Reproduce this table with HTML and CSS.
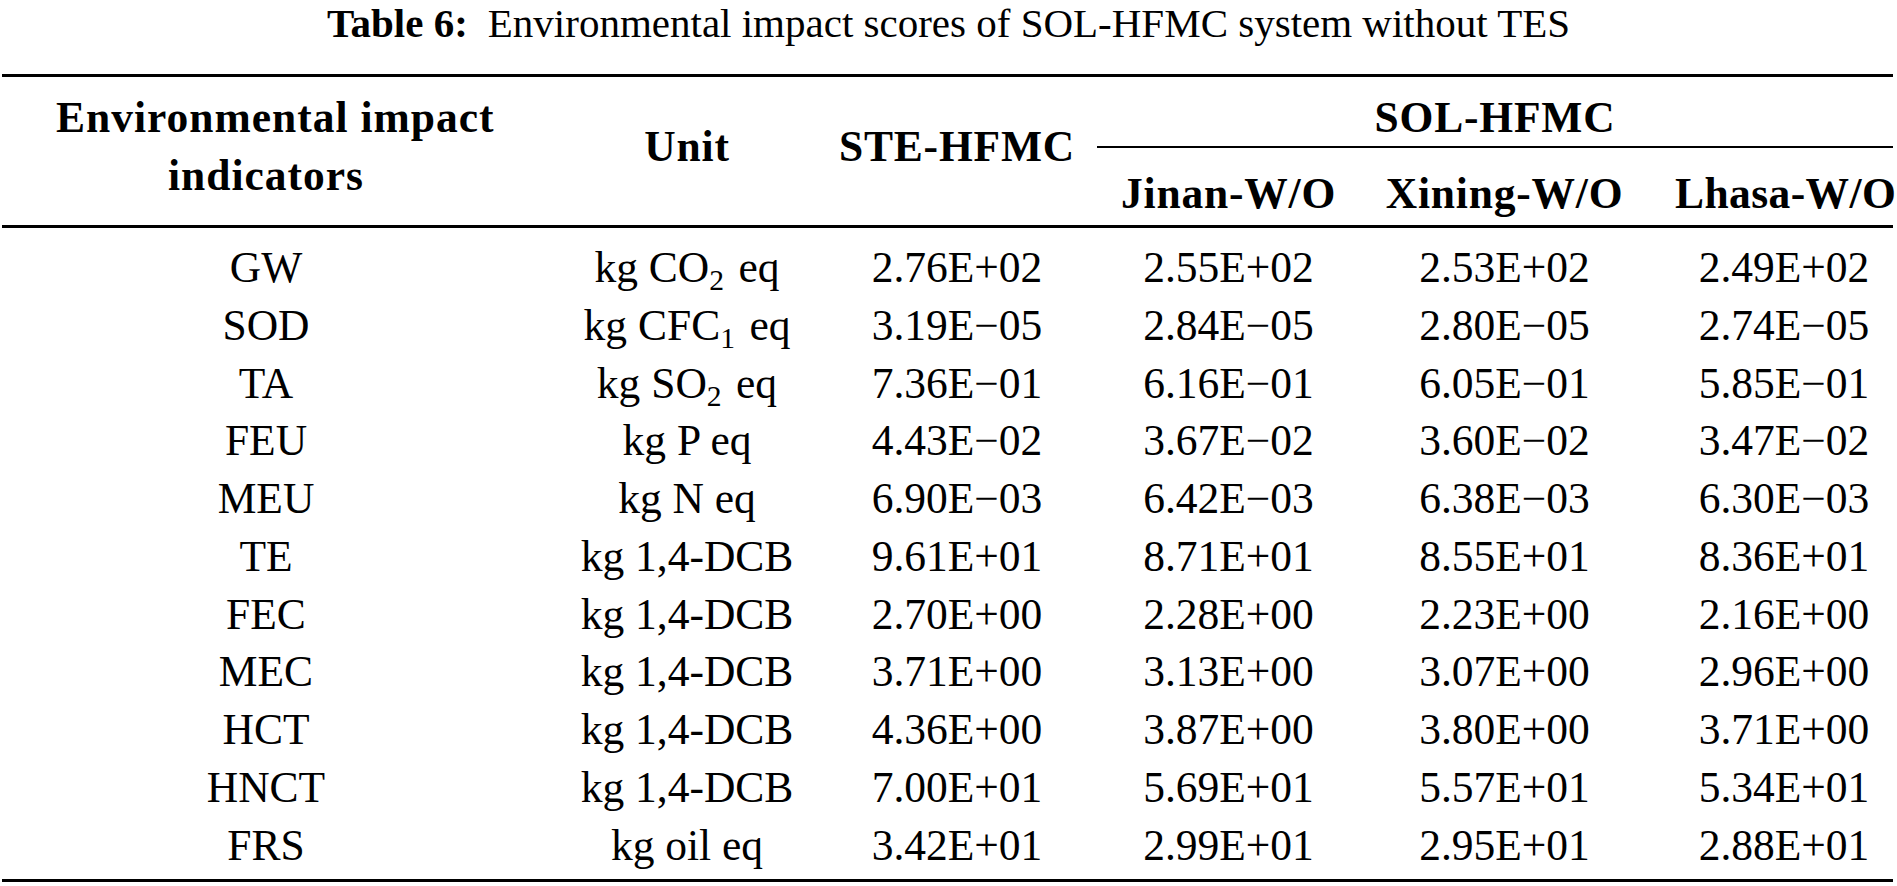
FILE: index.html
```html
<!DOCTYPE html>
<html lang="en">
<head>
<meta charset="utf-8">
<title>Table 6</title>
<link rel="stylesheet" href="styles.css">
</head>
<body>
<div class="page">
  <p class="caption"><b>Table 6:</b><span class="gap"></span>Environmental impact scores of SOL-HFMC system without TES</p>
  <table class="data">
    <colgroup>
      <col class="c1"><col class="c2"><col class="c3"><col class="c4"><col class="c5"><col class="c6">
    </colgroup>
    <thead>
      <tr>
        <th rowspan="2" class="h-ind">Environmental impact<br>indicators</th>
        <th rowspan="2" class="h-mid k2">Unit</th>
        <th rowspan="2" class="h-mid">STE-HFMC</th>
        <th colspan="3" class="h-group"><div class="group-label">SOL-HFMC</div></th>
      </tr>
      <tr class="sub">
        <th>Jinan-W/O</th>
        <th>Xining-W/O</th>
        <th class="k6">Lhasa-W/O</th>
      </tr>
    </thead>
    <tbody>
      <tr><td class="k1">GW</td><td class="k2">kg CO<sub>2</sub> eq</td><td>2.76E+02</td><td>2.55E+02</td><td>2.53E+02</td><td class="k6">2.49E+02</td></tr>
      <tr><td class="k1">SOD</td><td class="k2">kg CFC<sub>1</sub> eq</td><td>3.19E−05</td><td>2.84E−05</td><td>2.80E−05</td><td class="k6">2.74E−05</td></tr>
      <tr><td class="k1">TA</td><td class="k2">kg SO<sub>2</sub> eq</td><td>7.36E−01</td><td>6.16E−01</td><td>6.05E−01</td><td class="k6">5.85E−01</td></tr>
      <tr><td class="k1">FEU</td><td class="k2">kg P eq</td><td>4.43E−02</td><td>3.67E−02</td><td>3.60E−02</td><td class="k6">3.47E−02</td></tr>
      <tr><td class="k1">MEU</td><td class="k2">kg N eq</td><td>6.90E−03</td><td>6.42E−03</td><td>6.38E−03</td><td class="k6">6.30E−03</td></tr>
      <tr><td class="k1">TE</td><td class="k2">kg 1,4-DCB</td><td>9.61E+01</td><td>8.71E+01</td><td>8.55E+01</td><td class="k6">8.36E+01</td></tr>
      <tr><td class="k1">FEC</td><td class="k2">kg 1,4-DCB</td><td>2.70E+00</td><td>2.28E+00</td><td>2.23E+00</td><td class="k6">2.16E+00</td></tr>
      <tr><td class="k1">MEC</td><td class="k2">kg 1,4-DCB</td><td>3.71E+00</td><td>3.13E+00</td><td>3.07E+00</td><td class="k6">2.96E+00</td></tr>
      <tr><td class="k1">HCT</td><td class="k2">kg 1,4-DCB</td><td>4.36E+00</td><td>3.87E+00</td><td>3.80E+00</td><td class="k6">3.71E+00</td></tr>
      <tr><td class="k1">HNCT</td><td class="k2">kg 1,4-DCB</td><td>7.00E+01</td><td>5.69E+01</td><td>5.57E+01</td><td class="k6">5.34E+01</td></tr>
      <tr><td class="k1">FRS</td><td class="k2">kg oil eq</td><td>3.42E+01</td><td>2.99E+01</td><td>2.95E+01</td><td class="k6">2.88E+01</td></tr>
    </tbody>
  </table>
</div>
</body>
</html>
```

FILE: styles.css
```css
html {
  margin: 0;
  padding: 0;
  background: #ffffff;
}

body {
  margin: 0;
  padding: 0;
  font-family: "Liberation Serif", serif;
  font-size: 43.5px;
  color: #000000;
}

.page {
  width: 1897px;
}

.caption {
  margin: 0;
  height: 46px;
  font-size: 41px;
  line-height: 46px;
  text-align: center;
  white-space: nowrap;
}

.caption .gap {
  display: inline-block;
  width: 20px;
}

.data {
  margin: 28px 0 0 2px;
  width: 1891px;
  table-layout: fixed;
  border-collapse: separate;
  border-spacing: 0;
  font-family: "Liberation Serif", serif;
  font-size: 43.5px;
}

.c1 { width: 474px; }
.c2 { width: 346px; }
.c3 { width: 270px; }
.c4 { width: 273px; }
.c5 { width: 279px; }
.c6 { width: 249px; }

.data th,
.data td {
  padding: 0;
  text-align: center;
  white-space: nowrap;
  line-height: 57.75px;
}

.data th {
  font-weight: bold;
  vertical-align: top;
  letter-spacing: 0.8px;
}

.data thead tr:first-child th {
  border-top: 3px solid #000;
}

.data .h-ind {
  padding-top: 11px;
  padding-left: 54px;
  line-height: 58px;
  border-bottom: 3px solid #000;
  letter-spacing: 1px;
}

.data .h-mid {
  padding-top: 41px;
  border-bottom: 3px solid #000;
}

.data .h-group {
  padding-top: 11px;
}

.group-label {
  margin-left: 5px;
  line-height: 58px;
  border-bottom: 2px solid #000;
}

.data .sub th {
  padding-top: 16px;
  padding-bottom: 3px;
  line-height: 58px;
  border-bottom: 3px solid #000;
}

.data .k1 { padding-left: 54px; }
.data .k2 { padding-left: 76px; }
.data .k6 { padding-left: 31px; }
.data .sub .k6 { letter-spacing: 0.4px; }

.data tbody tr:first-child td {
  padding-top: 11px;
}

.data tbody tr:last-child td {
  padding-bottom: 5px;
  border-bottom: 3px solid #000;
}

.data sub {
  font-size: 0.68em;
  line-height: 0;
  vertical-align: -0.28em;
  margin-right: 0.12em;
}
```
